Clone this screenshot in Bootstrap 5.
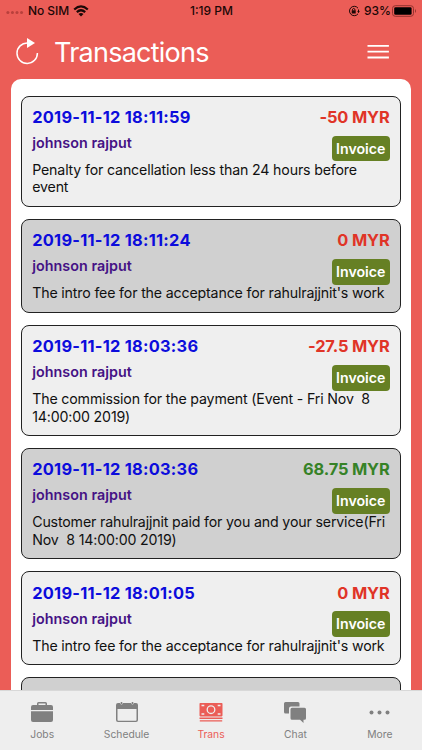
<!DOCTYPE html>
<html lang="en">
<head>
<meta charset="utf-8">
<meta name="viewport" content="width=device-width, initial-scale=1">
<title>Transactions</title>
<link href="https://cdn.jsdelivr.net/npm/bootstrap@5.3.0/dist/css/bootstrap.min.css" rel="stylesheet">
<style>
body{background:#eb5d57;font-family:Inter,"Liberation Sans",sans-serif;color:#111;}
.app{height:750px;width:422px}
.status{height:21px;font-size:12px;font-weight:500;color:#1c0807;padding:0 5px 0 6px;line-height:21px;flex:none}
.side{flex:1 1 0}
.sim{letter-spacing:-.05px}
.header{height:58px;padding:3px 33px 0 16px;flex:none}
.title{font-size:27px;font-weight:400;color:#fff;line-height:32px;letter-spacing:-.76px;margin-left:14px;padding-top:2px}
.sheet{margin:0 11px 0 10.5px;border-radius:10px 10px 0 0;padding:16.7px 10px 0;gap:12.3px;min-height:0}
.tx{background:#efefef;border:1.2px solid #222;border-radius:8px;padding:10.5px 10px 9.75px 10.7px;flex:none;min-height:93.7px}
.tx.alt{background:#d0d0d0}
.when,.amount{font-size:16.4px;font-weight:700;line-height:20px}
.when{color:#0c0cdc;letter-spacing:.25px}
.amount{color:#e03427;letter-spacing:-.15px;padding-right:.5px}
.amount.plus{color:#368227}
.who{font-size:14.3px;font-weight:600;color:#451285;line-height:18px;margin-top:7px;letter-spacing:.05px}
.inv{background:#668024;color:#fff;font-size:14.2px;font-weight:600;line-height:25.5px;height:25.5px;width:58.5px;border-radius:4px;margin:8.8px 0 -11px 0}
.memo{font-size:14.2px;line-height:17.3px;letter-spacing:-.165px;margin-top:9px;white-space:pre}
.tabs{height:60px;background:#eee;border-top:1px solid #d8d8d8;color:#808080;font-size:10.3px;flex:none}
.tab{flex:1 1 0;padding-top:9px;line-height:13px}
.tab svg{margin-bottom:4px}
.tab.on{color:#eb5d57}
</style>
<script src="https://cdn.jsdelivr.net/npm/bootstrap@5.3.0/dist/js/bootstrap.bundle.min.js"></script>
</head>
<body>
<div class="app d-flex flex-column overflow-hidden">
  <div class="status d-flex align-items-center">
    <div class="side d-flex align-items-center">
      <svg width="18" height="6" viewBox="0 0 19 6" fill="#b9403c"><circle cx="2" cy="4.500" r="1.600"/><circle cx="6.800" cy="4.500" r="1.600"/><circle cx="11.600" cy="4.500" r="1.600"/><circle cx="16.400" cy="4.500" r="1.600"/></svg>
      <span class="sim ms-1 me-1">No SIM</span>
      <svg width="16" height="12" viewBox="0 0 16 12" fill="none" stroke="#1c0807" stroke-width="2.2"><path d="M1.200 4.500Q8-1.700 14.800 4.500M3.800 7.100q4.200-3.700 8.400 0"/><path d="M8 11.500 5.500 9q2.500-2 5 0z" fill="#1c0807" stroke="none"/></svg>
    </div>
    <span>1:19 PM</span>
    <div class="side d-flex align-items-center justify-content-end">
      <svg class="me-1" width="12" height="12" viewBox="0 0 12 12" fill="none" stroke="#1c0807"><path d="M10 3.200A4.700 4.700 0 1 0 10 8.800M10.500 4.500v3"/><path d="M9.200 6h2.600l-1.300 2z" fill="#1c0807" stroke="none"/><path d="M3.700 5.300h4v3.200h-4z" fill="#1c0807" stroke="none"/><path d="M4.500 5.500V4.200q1.200-1.600 2.400 0v1.300"/></svg>
      <span class="pct">93%</span>
      <svg width="26" height="12" viewBox="0 0 26 12"><rect x="1.500" y=".7" width="21" height="10.600" rx="2.800" fill="none" stroke="#93332f"/><rect x="3.200" y="2.300" width="17.400" height="7.400" rx="1.300"/><path d="M24 4v4q2-2 0-4" fill="#93332f"/></svg>
    </div>
  </div>
  <header class="header d-flex align-items-center">
    <svg width="24" height="28" viewBox="0 0 24 28"><path d="M11.400 5A10.200 10.200 0 1 0 21.400 15" fill="none" stroke="#fff" stroke-width="1.500"/><path d="M11 0l8 5-8 5z" fill="#fff"/></svg>
    <h1 class="title mb-0 flex-grow-1">Transactions</h1>
    <svg width="22" height="14" viewBox="0 0 22 14" fill="#fff"><path d="M.5 0h21.400v1.800H.5zM.5 5.800h21.400v1.800H.5zM.5 11.600h21.400v1.800H.5z"/></svg>
  </header>
  <main class="sheet bg-white flex-grow-1 d-flex flex-column overflow-hidden">
    <article class="tx">
      <div class="d-flex justify-content-between">
        <div><div class="when">2019-11-12 18:11:59</div><div class="who">johnson rajput</div></div>
        <div class="d-flex flex-column align-items-end"><div class="amount">-50 MYR</div><div class="inv text-center">Invoice</div></div>
      </div>
      <div class="memo">Penalty for cancellation less than 24 hours before
event</div>
    </article>
    <article class="tx alt">
      <div class="d-flex justify-content-between">
        <div><div class="when">2019-11-12 18:11:24</div><div class="who">johnson rajput</div></div>
        <div class="d-flex flex-column align-items-end"><div class="amount">0 MYR</div><div class="inv text-center">Invoice</div></div>
      </div>
      <div class="memo">The intro fee for the acceptance for rahulrajjnit's work</div>
    </article>
    <article class="tx">
      <div class="d-flex justify-content-between">
        <div><div class="when">2019-11-12 18:03:36</div><div class="who">johnson rajput</div></div>
        <div class="d-flex flex-column align-items-end"><div class="amount">-27.5 MYR</div><div class="inv text-center">Invoice</div></div>
      </div>
      <div class="memo">The commission for the payment (Event - Fri Nov &nbsp;8
14:00:00 2019)</div>
    </article>
    <article class="tx alt">
      <div class="d-flex justify-content-between">
        <div><div class="when">2019-11-12 18:03:36</div><div class="who">johnson rajput</div></div>
        <div class="d-flex flex-column align-items-end"><div class="amount plus">68.75 MYR</div><div class="inv text-center">Invoice</div></div>
      </div>
      <div class="memo">Customer rahulrajjnit paid for you and your service(Fri
Nov &nbsp;8 14:00:00 2019)</div>
    </article>
    <article class="tx">
      <div class="d-flex justify-content-between">
        <div><div class="when">2019-11-12 18:01:05</div><div class="who">johnson rajput</div></div>
        <div class="d-flex flex-column align-items-end"><div class="amount">0 MYR</div><div class="inv text-center">Invoice</div></div>
      </div>
      <div class="memo">The intro fee for the acceptance for rahulrajjnit's work</div>
    </article>
    <article class="tx alt"></article>
  </main>
  <nav class="tabs d-flex">
    <div class="tab d-flex flex-column align-items-center">
      <svg width="24" height="24" viewBox="0 0 24 24" fill="#808080"><path d="M1 10V7q0-2 2-2h4V3.500Q7 2 8.500 2h7Q17 2 17 3.500V5h4q2 0 2 2v3zM8.500 5h7V3.400h-7z" fill-rule="evenodd"/><path d="M1 11.200h22V20q0 2-2 2H3q-2 0-2-2z"/></svg>
      <span>Jobs</span>
    </div>
    <div class="tab d-flex flex-column align-items-center">
      <svg width="24" height="24" viewBox="0 0 24 24" fill="#808080"><path d="M3 3h2q1.500 3 3 0h8q1.500 3 3 0h2q2 0 2 2v15q0 2-2 2H3q-2 0-2-2V5q0-2 2-2M2.500 9v11q0 .7.7.7h17.600q.7 0 .7-.7V9z" fill-rule="evenodd"/><path d="M5.700 2h1.600v2H5.700zM16.700 2h1.600v2h-1.600z"/></svg>
      <span>Schedule</span>
    </div>
    <div class="tab on d-flex flex-column align-items-center">
      <svg width="24" height="24" viewBox="0 0 24 24"><path d="M1.300 3h21.400q.8 0 .8.800v11.800q0 .8-.8.800H1.300q-.8 0-.8-.8V3.800q0-.8.8-.8M.5 17.600h23v1.400H.5zM.8 20.200h22.400v1.300H.8z" fill="#eb5d57"/><g fill="none" stroke="#eee" stroke-width="1.300"><circle cx="12" cy="9.700" r="3.800"/><path d="M2.500 5.500h2.800M2.500 14h2.800M18.700 5.500h2.800M18.700 14h2.800"/></g></svg>
      <span>Trans</span>
    </div>
    <div class="tab d-flex flex-column align-items-center">
      <svg width="24" height="24" viewBox="0 0 24 24" fill="#808080"><path d="M2.500 2h12.500q1.500 0 1.500 1.500V6.500H8q-2 0-2 2v5H2.500Q1 13.500 1 12V3.500Q1 2 2.500 2"/><path d="M9 7.800h12.500q1.500 0 1.500 1.500v9q0 1.500-1.500 1.500H20.500v3.200l-3.500-3.200H9q-1.500 0-1.500-1.500v-9Q7.500 7.800 9 7.800"/></svg>
      <span>Chat</span>
    </div>
    <div class="tab d-flex flex-column align-items-center">
      <svg width="24" height="24" viewBox="0 0 24 24" fill="#808080"><circle cx="3.500" cy="12.500" r="2"/><circle cx="11.500" cy="12.500" r="2"/><circle cx="19.500" cy="12.500" r="2"/></svg>
      <span>More</span>
    </div>
  </nav>
</div>
</body>
</html>
